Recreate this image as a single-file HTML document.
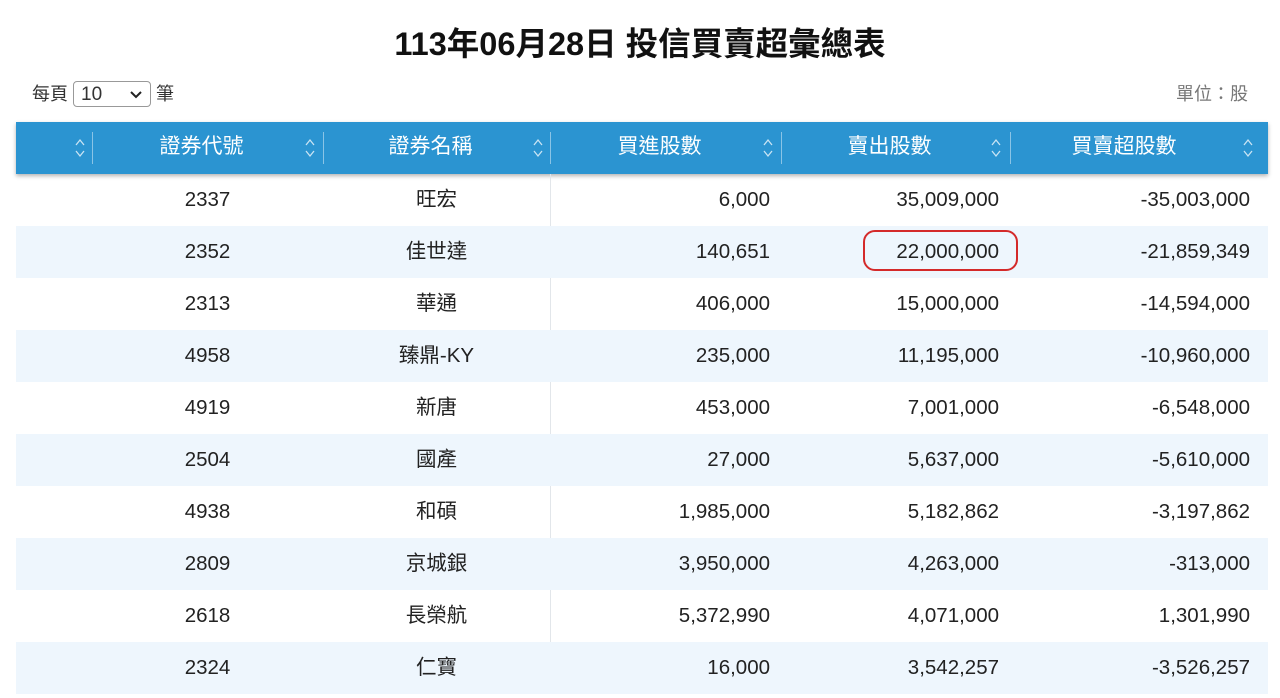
<!DOCTYPE html>
<html><head><meta charset="utf-8"><style>
*{margin:0;padding:0;box-sizing:border-box}
body{width:1280px;height:698px;overflow:hidden;background:#fff;font-family:"Liberation Sans","Noto Sans CJK TC",sans-serif;color:#222;position:relative}
.title{position:absolute;top:24px;left:0;width:1280px;text-align:center;font-size:32.5px;font-weight:bold;color:#111;line-height:40px}
.per{position:absolute;left:32px;top:81px;font-size:18px;color:#333;line-height:26px}
.sel{display:inline-block;width:78px;height:26px;border:1px solid #999;border-radius:4px;vertical-align:top;margin:0 5px;padding-left:7px;position:relative;font-size:19px}
.sel svg{position:absolute;right:8px;top:9px}
.unit{position:absolute;right:32px;top:82px;font-size:18px;color:#777;line-height:24px}
.hdr{position:absolute;left:16px;top:122px;width:1252px;height:52px;background:#2b94d1;box-shadow:0 2px 4px rgba(0,0,0,.3)}
.hc{position:absolute;top:0;height:52px;line-height:50px;color:#fff;font-size:21px;text-align:center}
.row{position:absolute;left:16px;width:1252px;height:52px;font-size:20.5px;line-height:52px}
.row.alt{background:#eef6fd}
.row span{position:absolute;top:0}
.vl{position:absolute;left:550px;top:174px;width:1px;height:520px;background:#e2e6ea}
.oval{position:absolute;left:863px;top:230px;width:155px;height:41px;border:2.5px solid #d42a2a;border-radius:12px}
</style></head><body>
<div class="title">113年06月28日 投信買賣超彙總表</div>
<div class="per">每頁<span class="sel">10<svg width="12" height="8" viewBox="0 0 12 8"><path d="M1 1l5 5 5-5" stroke="#222" stroke-width="2" fill="none"/></svg></span>筆</div>
<div class="unit">單位：股</div>
<div class="hdr">
<div class="hc" style="left:70px;width:231px">證券代號</div>
<div class="hc" style="left:301px;width:227px">證券名稱</div>
<div class="hc" style="left:528px;width:231px">買進股數</div>
<div class="hc" style="left:759px;width:229px">賣出股數</div>
<div class="hc" style="left:988px;width:240px">買賣超股數</div>
</div>
<div id="icons"></div>
<div class="vl"></div>
<div id="rows"></div>
<div class="oval"></div>
<script>
var ic=[80,310,538,768,996,1248],sp=[92,323,550,781,1010];
var h='';
ic.forEach(function(x){h+='<svg style="position:absolute;left:'+(x-6)+'px;top:136px" width="12" height="24" viewBox="0 0 12 24"><path d="M2 9l4-5 4 5M2 15l4 5 4-5" stroke="rgba(255,255,255,.75)" stroke-width="1.3" fill="none"/></svg>';});
sp.forEach(function(x){h+='<div style="position:absolute;left:'+x+'px;top:132px;width:1px;height:32px;background:rgba(255,255,255,.45)"></div>';});
document.getElementById('icons').innerHTML=h;
var d=[["2337","旺宏","6,000","35,009,000","-35,003,000"],["2352","佳世達","140,651","22,000,000","-21,859,349"],["2313","華通","406,000","15,000,000","-14,594,000"],["4958","臻鼎-KY","235,000","11,195,000","-10,960,000"],["4919","新唐","453,000","7,001,000","-6,548,000"],["2504","國產","27,000","5,637,000","-5,610,000"],["4938","和碩","1,985,000","5,182,862","-3,197,862"],["2809","京城銀","3,950,000","4,263,000","-313,000"],["2618","長榮航","5,372,990","4,071,000","1,301,990"],["2324","仁寶","16,000","3,542,257","-3,526,257"]];
var r='';
d.forEach(function(v,i){r+='<div class="row'+(i%2?' alt':'')+'" style="top:'+(174+i*52)+'px">'+
'<span style="left:76px;width:231px;text-align:center">'+v[0]+'</span>'+
'<span style="left:307px;width:227px;text-align:center">'+v[1]+'</span>'+
'<span style="right:498px;text-align:right">'+v[2]+'</span>'+
'<span style="right:269px;text-align:right">'+v[3]+'</span>'+
'<span style="right:18px;text-align:right">'+v[4]+'</span></div>';});
document.getElementById('rows').innerHTML=r;
</script>
</body></html>
